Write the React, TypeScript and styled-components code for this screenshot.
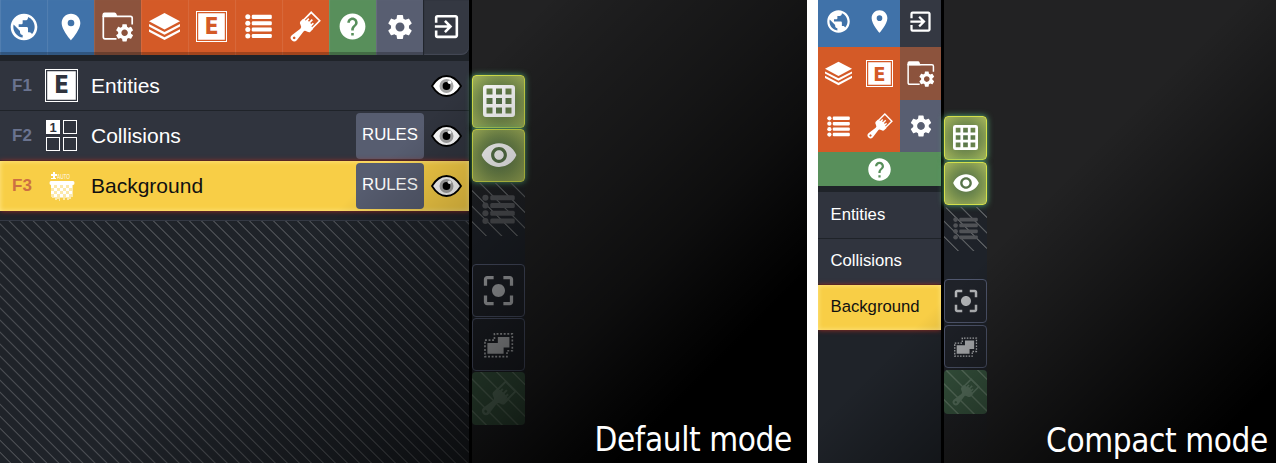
import React from "react";
import styled, { createGlobalStyle, css } from "styled-components";
import {
  MdPublic,
  MdPlace,
  MdHelp,
  MdSettings,
  MdExitToApp,
  MdVisibility,
  MdCenterFocusStrong,
} from "react-icons/md";

const Global = createGlobalStyle`
  * { box-sizing: border-box; }
  body { margin: 0; background: #fff; font-family: "Liberation Sans", Arial, sans-serif; }
`;

const Page = styled.main`
  display: flex;
  gap: 11px;
  width: 1276px;
  height: 463px;
  overflow: hidden;
`;

const Window = styled.section<{ $w: number }>`
  position: relative;
  display: flex;
  flex: none;
  width: ${(p) => p.$w}px;
  height: 463px;
  background: #222223;
  overflow: hidden;
`;

const Shade = styled.div<{ $stops: string }>`
  position: absolute;
  inset: 0;
  pointer-events: none;
  background: linear-gradient(135deg, ${(p) => p.$stops});
`;

const Panel = styled.aside<{ $w: number }>`
  display: flex;
  flex-direction: column;
  flex: none;
  width: ${(p) => p.$w}px;
  background: #1f2329;
  border-right: 3px solid #000;
`;

const Bar = styled.nav`
  display: grid;
  grid-template-columns: repeat(9, 47px) 46px;
  height: 55px;
  margin-bottom: 6px;
`;

const CompactBar = styled.nav`
  display: grid;
  grid-template-columns: repeat(3, 41px);
  grid-template-rows: 47px 53px 52px 34px;
  margin-bottom: 6px;
`;

const BarButton = styled.button<{ $bg: string; $flat?: boolean; $last?: boolean; $wide?: boolean; $low?: boolean }>`
  display: flex;
  align-items: center;
  justify-content: center;
  padding: ${(p) => (p.$flat ? "0" : "0 0 2px")};
  border: 0;
  color: #fff;
  background: ${(p) => p.$bg};
  ${(p) => !p.$flat && css`box-shadow: inset 0 -3px 0 rgba(0, 0, 0, 0.24), inset 1px 0 1px rgba(255, 255, 255, 0.1);`}
  ${(p) => p.$last && css`border-radius: 0 0 8px 0; box-shadow: inset 1px 0 1px #20242b, inset 0 -1px 1px #4a4f5c;`}
  ${(p) => p.$wide && css`grid-column: 1 / -1;`}
  ${(p) => p.$low && css`padding-bottom: 4px;`}
`;

const Rows = styled.div`
  display: flex;
  flex-direction: column;
`;

const Row = styled.div<{ $active?: boolean; $h: number; $compact?: boolean }>`
  display: flex;
  align-items: center;
  height: ${(p) => p.$h}px;
  padding-left: ${(p) => (p.$compact ? 12.5 : 12)}px;
  padding-bottom: ${(p) => (p.$compact ? 1 : 0)}px;
  font-size: ${(p) => (p.$compact ? 16.7 : 21)}px;
  color: ${(p) => (p.$active ? "#111" : "#fff")};
  background: ${(p) => (p.$active ? "#f8ce46" : "#30343e")};
  border-bottom: ${(p) => (p.$active ? "0" : "1px solid #1f2329")};
  ${(p) =>
    p.$active &&
    css`
      box-shadow: 0 0 5px #a52a22, inset 0 0 5px #ffe88b;
      clip-path: inset(-8px 0);
    `}
`;

const Key = styled.span<{ $active?: boolean }>`
  width: 32px;
  font-size: 17px;
  font-weight: 700;
  color: ${(p) => (p.$active ? "#cc7042" : "#6a738f")};
`;

const RowIcon = styled.span`
  display: flex;
  justify-content: center;
  width: 35px;
`;

const Label = styled.span`
  flex: 1;
  padding-left: 12px;
`;

const Rules = styled.button`
  width: 68px;
  height: 46px;
  margin-right: 7px;
  padding: 0 0 2px;
  border: 0;
  border-radius: 4px;
  background: #575d70;
  color: #fff;
  font: 16.8px "Liberation Sans", Arial, sans-serif;
`;

const EyeSlot = styled.span`
  display: flex;
  width: 38px;
`;

const Hatch = styled.div`
  flex: 1;
  margin-top: 9px;
  border-top: 1px solid #343944;
  background: repeating-linear-gradient(45deg, transparent 0 6.7px, #484b50 7.3px 7.9px, transparent 8.5px);
`;

const Tools = styled.div<{ $w: number; $top: number; $gap: number }>`
  display: flex;
  flex-direction: column;
  flex: none;
  gap: ${(p) => p.$gap}px;
  width: ${(p) => p.$w}px;
  padding-top: ${(p) => p.$top}px;
  background: linear-gradient(transparent 35%, #1e2229 50%, #1e2229 75%, transparent);
`;

type Kind = "on" | "off" | "plain" | "green";

const Tool = styled.button<{ $kind: Kind; $size: number; $gapTop?: number }>`
  display: flex;
  align-items: center;
  justify-content: center;
  width: 100%;
  height: ${(p) => p.$size}px;
  margin-top: ${(p) => p.$gapTop ?? 0}px;
  padding: 0;
  border: 0;
  border-radius: 4px;
  background: none;
  color: #fff;
  ${(p) =>
    p.$kind === "on" &&
    css`
      border: 1px solid #d4e04a;
      background: radial-gradient(circle, #56734a 15%, #78904e 55%, #a6b65b 100%);
      box-shadow: 0 0 6px #58b078;
    `}
  ${(p) => p.$kind === "plain" && css`border: 1px solid #50576e; background: #1f2229; color: #b6b8bb;`}
  ${(p) =>
    p.$kind === "off" &&
    css`
      color: #505256;
      background: repeating-linear-gradient(45deg, transparent 0 9.2px, #5a5d60 9.8px 10.4px, transparent 11px);
    `}
  ${(p) =>
    p.$kind === "green" &&
    css`
      color: #5f7b66;
      background: repeating-linear-gradient(45deg, transparent 0 9px, #617b66 9.8px 10.4px, transparent 11.2px) #3a5942;
    `}
`;

const Caption = styled.div<{ $right: number; $bottom: number }>`
  position: absolute;
  right: ${(p) => p.$right}px;
  bottom: ${(p) => p.$bottom}px;
  color: #fff;
  font: 33px/38px "DejaVu Sans Condensed", "DejaVu Sans", sans-serif;
  font-stretch: condensed;
  letter-spacing: -0.38px;
  white-space: nowrap;
`;

const Svg = ({ s, box = 24, children }: { s: number; box?: number; children: React.ReactNode }) => (
  <svg width={s} height={s} viewBox={`0 0 ${box} ${box}`} fill="currentColor" overflow="visible">
    {children}
  </svg>
);

const FolderGear = ({ s }: { s: number }) => (
  <Svg s={s} box={32}>
    <path d="M.500 6V3.500Q.500 1.500 2.500 1.500h10q1.500 0 2 1.500l1 3Z" />
    <path d="M14.500 27.800H3Q1.300 27.800 1.300 26V5.300H28.500Q30.200 5.300 30.200 7v6.500" fill="none" stroke="currentColor" strokeWidth="1.700" />
    <g transform="translate(11.800 11) scale(.9)">
      <MdSettings size={24} />
    </g>
  </Svg>
);

const Layers = ({ s }: { s: number }) => (
  <Svg s={s} box={32}>
    <path d="M16 2 32 10.500 16 19 0 10.500Z" />
    <path d="M0 13.500 16 21.600 32 13.500V16L16 24.600 0 16Z" />
    <path d="M0 18.800 16 27 32 18.800V21.400L16 30 0 21.400Z" />
  </Svg>
);

const LetterBox = styled.span<{ $s: number; $fg: string; $ring: string }>`
  display: flex;
  align-items: center;
  justify-content: center;
  width: ${(p) => p.$s}px;
  height: ${(p) => p.$s}px;
  border: 1px solid #fff;
  box-shadow: inset 0 0 0 1.2px ${(p) => p.$ring};
  background: #fff;
  color: ${(p) => p.$fg};
  font: 700 ${(p) => p.$s * 0.74}px/1 "DejaVu Sans Condensed", "DejaVu Sans", sans-serif;
  font-stretch: condensed;
`;

const ListIcon = ({ s }: { s: number }) => (
  <Svg s={s} box={28}>
    {[3.5, 10.1, 16.7, 23.3].map((y) => (
      <g key={y}>
        <circle cx="2.900" cy={y + 0.5} r="2.600" />
        <rect x="7" y={y - 1.6} width="20.800" height="4.200" rx="1.300" />
      </g>
    ))}
  </Svg>
);

const Brush = ({ s }: { s: number }) => (
  <Svg s={s} box={32}>
    <g transform="translate(13.600 18.400) scale(.92) rotate(45) translate(-16 -16)">
      <path d="M9.300-3.500h13.400v12h-13.400Z" fill="none" stroke="currentColor" strokeWidth="1.900" />
      <path d="M11.500 9V3.500h1.900v2.300h1.700V1.500h1.900v4.300h1.700V3.500h1.900V9Z" />
      <path d="M8 8h16v4.500q0 1.800-3 2.600-3 .8-2.600 3l1.600 12a4 4 0 1 1-8 0l1.600-12q.4-2.200-2.600-3-3-.8-3-2.600Zm8 20.800a1.500 1.500 0 1 0 0 3 1.500 1.500 0 0 0 0-3Z" fillRule="evenodd" />
    </g>
  </Svg>
);

const GridIcon = ({ s }: { s: number }) => (
  <Svg s={s} box={32}>
    <path
      fillRule="evenodd"
      d="M3 0h26q3 0 3 3v26q0 3-3 3H3q-3 0-3-3V3q0-3 3-3ZM3.500 3.500v6h6v-6Zm9.500 0v6h6v-6Zm9.500 0v6h6v-6ZM3.500 13v6h6v-6Zm9.500 0v6h6v-6Zm9.500 0v6h6v-6ZM3.500 22.500v6h6v-6Zm9.500 0v6h6v-6Zm9.500 0v6h6v-6Z"
    />
  </Svg>
);

const Merge = ({ s }: { s: number }) => (
  <Svg s={s} box={30}>
    <path d="M3.500 13.500h10.800v-6.300h12v11h-6v6.300H3.500Z" />
    <path d="M1 10.500h9.800V4h18.500v17.500h-5.500v6H1Z" fill="none" stroke="currentColor" strokeWidth="1.700" strokeDasharray="2 1.700" />
  </Svg>
);

const Eye = () => (
  <svg width="31" height="22" viewBox="0 0 31 22">
    <path d="M1 11Q7 1 15.500 1T30 11Q24 21 15.500 21T1 11Z" fill="#fff" stroke="#000" strokeWidth="1.800" />
    <circle cx="15.500" cy="11" r="7" fill="#a5a5a5" />
    <circle cx="15.500" cy="11" r="3.900" fill="#000" />
    <circle cx="18.500" cy="7.300" r="1.800" fill="#fff" />
  </svg>
);

const TileOne = styled.span`
  display: flex;
  align-items: center;
  justify-content: center;
  background: #fff;
  color: #30343e;
  font: 700 13px/1 "Liberation Sans", Arial, sans-serif;
`;
const Tile = styled.span`
  border: 1.5px solid #fff;
`;
const Tiles = styled.span`
  display: grid;
  grid-template: 14px 14px / 14px 14px;
  gap: 3px;
`;

const AutoTile = () => (
  <svg width="26" height="31" viewBox="0 0 26 31" fill="#fff">
    <path d="M4 1h2v2h2v2H6v2H4V5H2V3h2ZM2 7h5v1H2ZM2 10h22q1.500 0 1.500 2T24 14H2Q.500 14 .500 12T2 10Z" />
    <path d="M2 14h3v3H2Zm6 0h3v3H8Zm6 0h3v3h-3Zm6 0h3v3h-3ZM5 17h3v3H5Zm6 0h3v3h-3Zm6 0h3v3h-3ZM2 20h3v3H2Zm6 0h3v3H8Zm6 0h3v3h-3Zm6 0h3v3h-3ZM5 23h3v3H5Zm6 0h3v3h-3Zm6 0h3v3h-3Z" />
    <path d="M2 14h22v12h-2v2h-2v1h-2v-2h-2v2h-2v-2h-3v3h-1v-2H8v1H6v-2H3v-1H2Z" opacity=".55" />
    <text x="8" y="8" fontSize="6.500" textLength="13" lengthAdjust="spacingAndGlyphs" opacity=".9">AUTO</text>
  </svg>
);

const C = { blue: "#4072a9", brown: "#8c533d", orange: "#d45a27", green: "#588f5b", slate: "#585e71", dark: "#343842" };

function SideTools({ compact }: { compact?: boolean }) {
  const h = compact ? 43.5 : 52.5;
  return (
    <Tools $w={compact ? 43 : 53} $top={compact ? 116 : 75} $gap={compact ? 2 : 1.5}>
      <Tool $kind="on" $size={h}><GridIcon s={compact ? 25 : 32} /></Tool>
      <Tool $kind="on" $size={h}><MdVisibility size={compact ? 28 : 38} /></Tool>
      <Tool $kind="off" $size={h}><ListIcon s={compact ? 25 : 33} /></Tool>
      <Tool $kind="plain" $size={h} $gapTop={compact ? 26.5 : 27}><MdCenterFocusStrong size={compact ? 30 : 39} /></Tool>
      <Tool $kind="plain" $size={h}><Merge s={compact ? 23 : 29} /></Tool>
      <Tool $kind="green" $size={h}><Brush s={compact ? 28 : 36} /></Tool>
    </Tools>
  );
}

export default function App() {
  return (
    <>
      <Global />
      <Page>
        <Window $w={807}>
          <Panel $w={472}>
            <Bar>
              <BarButton $bg={C.blue}><MdPublic size={32} /></BarButton>
              <BarButton $bg={C.blue}><MdPlace size={32} /></BarButton>
              <BarButton $bg={C.brown}><FolderGear s={32} /></BarButton>
              <BarButton $bg={C.orange}><Layers s={31} /></BarButton>
              <BarButton $bg={C.orange}><LetterBox $s={31} $fg={C.orange} $ring={C.orange}>E</LetterBox></BarButton>
              <BarButton $bg={C.orange}><ListIcon s={27} /></BarButton>
              <BarButton $bg={C.orange}><Brush s={31} /></BarButton>
              <BarButton $bg={C.green}><MdHelp size={31} /></BarButton>
              <BarButton $bg={C.slate}><MdSettings size={30} /></BarButton>
              <BarButton $bg={C.dark} $last><MdExitToApp size={31} /></BarButton>
            </Bar>
            <Rows>
              <Row $h={50}>
                <Key>F1</Key>
                <RowIcon><LetterBox $s={33} $fg="#30343e" $ring="#30343e">E</LetterBox></RowIcon>
                <Label>Entities</Label>
                <EyeSlot><Eye /></EyeSlot>
              </Row>
              <Row $h={50}>
                <Key>F2</Key>
                <RowIcon><Tiles><TileOne>1</TileOne><Tile /><Tile /><Tile /></Tiles></RowIcon>
                <Label>Collisions</Label>
                <Rules>RULES</Rules>
                <EyeSlot><Eye /></EyeSlot>
              </Row>
              <Row $h={50} $active>
                <Key $active>F3</Key>
                <RowIcon><AutoTile /></RowIcon>
                <Label>Background</Label>
                <Rules>RULES</Rules>
                <EyeSlot><Eye /></EyeSlot>
              </Row>
            </Rows>
            <Hatch />
          </Panel>
          <SideTools />
          <Shade $stops="transparent 43%, rgba(0,0,0,.1) 47%, rgba(0,0,0,.2) 52%, rgba(0,0,0,.38) 62%, rgba(0,0,0,.6) 72%, #000 85%" />
          <Caption $right={15} $bottom={4}>Default mode</Caption>
        </Window>
        <Window $w={458}>
          <Panel $w={126}>
            <CompactBar>
              <BarButton $flat $low $bg={C.blue}><MdPublic size={27} /></BarButton>
              <BarButton $flat $low $bg={C.blue}><MdPlace size={27} /></BarButton>
              <BarButton $flat $low $bg={C.dark}><MdExitToApp size={27} /></BarButton>
              <BarButton $flat $bg={C.orange}><Layers s={27} /></BarButton>
              <BarButton $flat $bg={C.orange}><LetterBox $s={27} $fg={C.orange} $ring={C.orange}>E</LetterBox></BarButton>
              <BarButton $flat $bg={C.brown}><FolderGear s={28} /></BarButton>
              <BarButton $flat $bg={C.orange}><ListIcon s={23} /></BarButton>
              <BarButton $flat $bg={C.orange}><Brush s={26} /></BarButton>
              <BarButton $flat $bg={C.slate}><MdSettings size={26} /></BarButton>
              <BarButton $flat $wide $bg={C.green}><MdHelp size={27} /></BarButton>
            </CompactBar>
            <Rows>
              <Row $compact $h={47}>Entities</Row>
              <Row $compact $h={46}>Collisions</Row>
              <Row $compact $h={45} $active>Background</Row>
            </Rows>
          </Panel>
          <SideTools compact />
          <Shade $stops="transparent 46%, #000 91%" />
          <Caption $right={8} $bottom={3}>Compact mode</Caption>
        </Window>
      </Page>
    </>
  );
}
